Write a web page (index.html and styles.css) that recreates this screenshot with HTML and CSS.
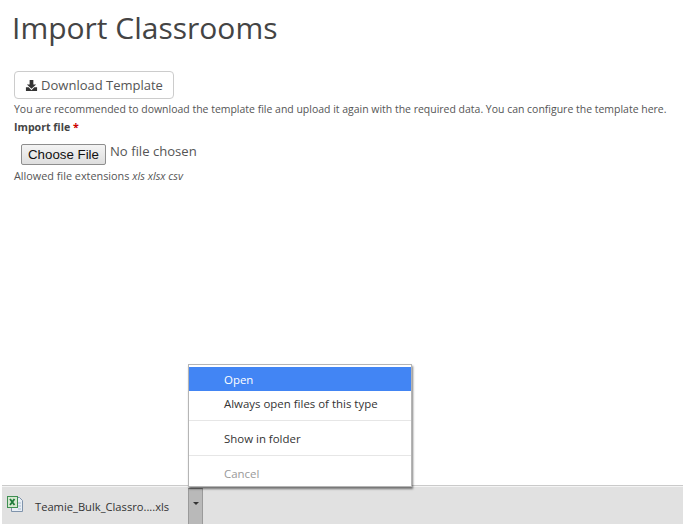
FILE: index.html
```html
<!DOCTYPE html>
<html lang="en">
<head>
<meta charset="utf-8">
<title>Import Classrooms</title>
<link rel="stylesheet" href="styles.css">
</head>
<body>
<main class="page">
  <h1 class="title">Import Classrooms</h1>
  <button class="btn-download" type="button">
    <svg class="icon-dl" viewBox="0 0 14 14" width="13" height="13" aria-hidden="true"><path d="M5 1h4v5h3L7 10.500 2 6h3z" fill="#333"/><path d="M1 9h3l3 3 3-3h3v4H1z" fill="#333"/></svg>
    <span>Download Template</span>
  </button>
  <p class="help">You are recommended to download the template file and upload it again with the required data. You can configure the template here.</p>
  <label class="field-label">Import file <span class="req">*</span></label>
  <div class="file-row">
    <button class="btn-file" type="button">Choose File</button>
    <span class="file-name">No file chosen</span>
  </div>
  <p class="ext">Allowed file extensions <em>xls xlsx csv</em></p>
</main>
<div class="menu">
  <div class="menu-item active">Open</div>
  <div class="menu-item">Always open files of this type</div>
  <div class="sep"></div>
  <div class="menu-item">Show in folder</div>
  <div class="sep"></div>
  <div class="menu-item disabled">Cancel</div>
</div>
<footer class="shelf">
  <div class="dl-item">
    <svg class="xls" viewBox="0 0 18 18" width="18" height="18" aria-hidden="true">
      <path d="M5.500 1.500h8l3 3v11h-11z" fill="#e8eef5" stroke="#7f93ab"/>
      <path d="M12 7h3M12 10h3M12 13h3" stroke="#a9bbd0"/>
      <rect x="1.500" y="0.500" width="10" height="11" fill="#d5e8d0" stroke="#3f8f52"/>
      <path d="M4 3l4.500 6M8.500 3l-4.500 6" stroke="#1d7a3a" stroke-width="1.800"/>
    </svg>
    <span class="dl-name">Teamie_Bulk_Classro....xls</span>
  </div>
  <div class="dl-caret"><span class="tri"></span></div>
</footer>
</body>
</html>
```
FILE: styles.css
```css
html, body { margin: 0; height: 530px; overflow: hidden; background: #fff; }
body { position: relative; font-family: "Open Sans", sans-serif; color: #555; }
.page { padding: 0 14px; display: flex; flex-direction: column; align-items: flex-start; }
.title { margin: 7px 0 0 -2px; font-size: 30px; line-height: 41px; font-weight: 400; color: #444; }
.btn-download { margin-top: 23px; height: 28px; width: 160px; padding: 0; display: flex; align-items: center; justify-content: center; gap: 3px; background: #fff; border: 1px solid #ccc; border-radius: 4px; font: 13px "Open Sans", sans-serif; color: #555; }
.icon-dl { flex: none; }
.help { margin: 3px 0 0; font-size: 10.480px; line-height: 14px; color: #555; white-space: nowrap; }
.field-label { margin-top: 4px; font-size: 10.600px; line-height: 14px; font-weight: 700; color: #444; }
.req { color: #c00; }
.file-row { margin: 10px 0 0 7px; display: flex; align-items: flex-start; gap: 4px; }
.btn-file { height: 21px; width: 85px; padding: 0; background: linear-gradient(#f4f4f4, #dedede); border: 1px solid #8e8e8e; border-radius: 2px; font: 13.300px "Liberation Sans", sans-serif; color: #111; }
.file-name { font-size: 13.100px; line-height: 14px; color: #555; }
.ext { margin: 4px 0 0; font-size: 10.850px; line-height: 14px; color: #555; }
.menu { position: absolute; left: 188px; top: 364px; width: 224px; box-sizing: border-box; padding: 2px 0 1px; background: #fff; border: 1px solid #b5b5b5; box-shadow: 1px 2px 2px rgba(0,0,0,.5); font-size: 11.450px; color: #333; z-index: 2; }
.menu-item { height: 24px; line-height: 26px; padding-left: 35px; }
.menu-item.active { background: #4285f4; color: #fff; }
.menu-item.disabled { color: #999; }
.sep { height: 1px; margin: 5px 0; background: #e6e6e6; }
.shelf { position: absolute; left: 2px; right: 0; top: 485px; height: 39px; box-sizing: border-box; display: flex; background: #e1e1e1; border-top: 1px solid #cacaca; box-shadow: inset 0 1px 0 #f4f4f4; }
.dl-item { width: 186px; display: flex; align-items: center; padding-left: 4px; box-sizing: border-box; gap: 11px; }
.xls { flex: none; }
.dl-name { font-size: 11.170px; line-height: 15px; margin-top: 3px; color: #333; }
.dl-caret { width: 15px; margin-top: 2px; display: flex; justify-content: center; padding-top: 13px; box-sizing: border-box; background: #b9b9b9; border: 1px solid #9a9a9a; border-top-color: #7d7d7d; border-bottom: 0; }
.tri { width: 0; height: 0; border: 3px solid transparent; border-top-color: #333; }
```
